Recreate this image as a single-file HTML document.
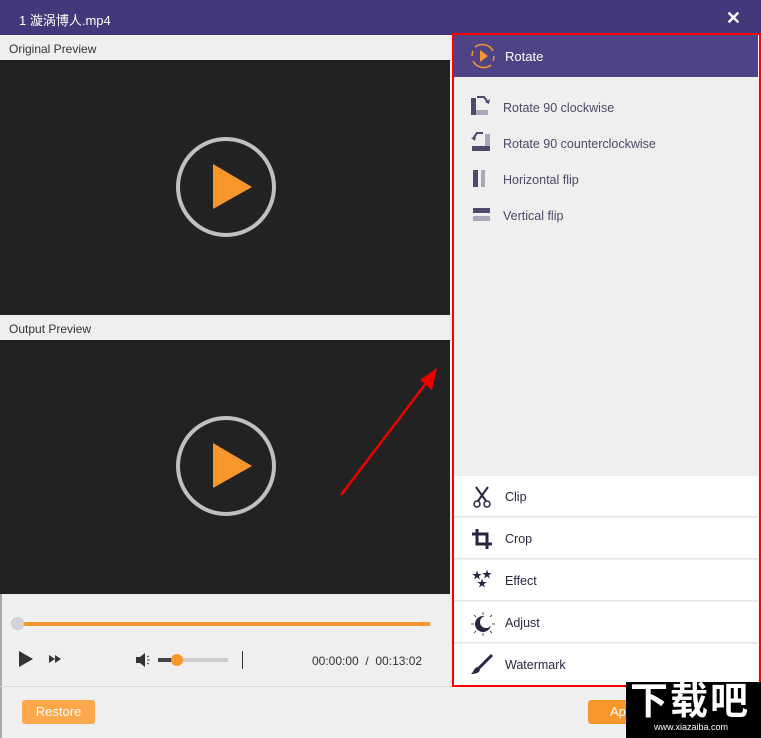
<!DOCTYPE html>
<html><head><meta charset="utf-8"><style>
*{margin:0;padding:0;box-sizing:border-box}
body{width:761px;height:738px;position:relative;overflow:hidden;background:#efefef;font-family:"Liberation Sans","Noto Sans CJK SC",sans-serif;font-size:12px;color:#333}
.abs{position:absolute}
.title{left:0;top:0;width:761px;height:35px;background:#45387a;color:#fff;font-size:13px;padding:10px 0 0 19px}
.lbl{left:0;width:450px;height:25px;background:#efefef;padding:7px 0 0 9px;color:#333}
.dark{left:0;width:450px;background:#222}
.item{left:471px;color:#4a4a6a;font-size:12.5px}
.bi{left:454px;width:304px;height:41px;background:#fff;border-bottom:1px solid #e6e6e6}
.bi span{position:absolute;left:51px;top:14px;color:#2a2440;font-size:12.5px}
.bi svg{position:absolute;left:16px;top:9px}
</style></head><body>
<div class="abs title">1 漩涡博人.mp4</div>
<div class="abs" style="right:20px;top:8px;color:#fff;font-size:18px;font-weight:bold">✕</div>
<div class="abs" style="left:0;top:35px;width:2px;height:703px;background:#aaa"></div>
<div class="abs lbl" style="top:35px">Original Preview</div>
<div class="abs dark" style="top:60px;height:255px"></div>
<div class="abs lbl" style="top:315px">Output Preview</div>
<div class="abs dark" style="top:340px;height:254px"></div>
<svg class="abs" style="left:0;top:0" width="450" height="600">
<circle cx="226" cy="187" r="48" fill="none" stroke="#c0c0c0" stroke-width="4"/>
<polygon points="213,164 252,187 213,209" fill="#f7962a"/>
<circle cx="226" cy="466" r="48" fill="none" stroke="#c0c0c0" stroke-width="4"/>
<polygon points="213,443 252,466 213,488" fill="#f7962a"/>
</svg>
<div class="abs" style="left:18px;top:622px;width:412px;height:4px;background:#f7962a"></div>
<div class="abs" style="left:11px;top:617px;width:13px;height:13px;border-radius:50%;background:#d4d4d4;border:1px solid #ccc"></div>
<svg class="abs" style="left:18px;top:650px" width="50" height="20"><polygon points="1,1 15,9 1,17" fill="#333"/><polygon points="31,5 37,9 31,13" fill="#333"/><polygon points="37,5 43,9 37,13" fill="#333"/></svg>
<svg class="abs" style="left:135px;top:652px" width="20" height="16"><rect x="1" y="5" width="4" height="6" fill="#333"/><polygon points="5,5 10,1 10,15 5,11" fill="#333"/><path d="M12 5l2-1M12 8h3M12 11l2 1" stroke="#555"/></svg>
<div class="abs" style="left:158px;top:658px;width:70px;height:4px;background:#ccc"></div>
<div class="abs" style="left:158px;top:658px;width:20px;height:4px;background:#444"></div>
<div class="abs" style="left:171px;top:654px;width:12px;height:12px;border-radius:50%;background:#f7962a"></div>
<div class="abs" style="left:242px;top:651px;width:1px;height:18px;background:#333"></div>
<div class="abs" style="left:312px;top:654px;color:#333;font-size:12px">00:00:00&nbsp; / &nbsp;00:13:02</div>
<div class="abs" style="left:0;top:686px;width:761px;height:1px;background:#d8d8d8"></div>
<div class="abs" style="left:22px;top:700px;width:73px;height:24px;background:#fda84a;border-radius:3px;color:#fff;font-size:13px;text-align:center;line-height:24px">Restore</div>
<div class="abs" style="left:588px;top:700px;width:80px;height:24px;background:#f7962a;border-radius:3px;color:#fff;font-size:13px;padding:4px 0 0 22px">Apply</div>
<div class="abs" style="left:452px;top:33px;width:309px;height:654px;border:2px solid #f00;background:#efefef"></div>
<div class="abs" style="left:454px;top:35px;width:304px;height:42px;background:#4f4287"></div>
<svg class="abs" style="left:469px;top:42px" width="28" height="28"><path d="M24 9A12 12 0 0 0 6 5M4 19A12 12 0 0 0 22 23" fill="none" stroke="#f7962a" stroke-width="1.5"/><path d="M3 14A11 11 0 0 1 4 9M25 14A11 11 0 0 1 24 19" fill="none" stroke="#f7962a" stroke-width="1.5"/><polygon points="11,8 19,14 11,20" fill="#f7962a"/></svg>
<div class="abs" style="left:505px;top:49px;color:#fff;font-size:13px">Rotate</div>
<svg class="abs" style="left:470px;top:96px" width="24" height="140">
<rect x="1" y="2" width="5" height="17" fill="#4f4a6a"/><rect x="6" y="14" width="12" height="5" fill="#aaa8b8"/><path d="M7 1h7l3 4" fill="none" stroke="#4f4a6a" stroke-width="2"/><polygon points="15,6 20,3 19,8" fill="#4f4a6a"/>
<rect x="15" y="38" width="5" height="17" fill="#aaa8b8"/><rect x="2" y="50" width="18" height="5" fill="#4f4a6a"/><path d="M13 37h-6l-3 4" fill="none" stroke="#4f4a6a" stroke-width="2"/><polygon points="1,42 6,40 5,45" fill="#4f4a6a"/>
<rect x="3" y="74" width="5" height="17" fill="#4f4a6a"/><rect x="11" y="74" width="4" height="17" fill="#aaa8b8"/>
<rect x="3" y="112" width="17" height="5" fill="#4f4a6a"/><rect x="3" y="120" width="17" height="5" fill="#aaa8b8"/>
</svg>
<div class="abs item" style="left:503px;top:101px">Rotate 90 clockwise</div>
<div class="abs item" style="left:503px;top:137px">Rotate 90 counterclockwise</div>
<div class="abs item" style="left:503px;top:173px">Horizontal flip</div>
<div class="abs item" style="left:503px;top:209px">Vertical flip</div>
<div class="abs bi" style="top:476px"><svg width="24" height="24"><path d="M6 2l10 14M18 2L8 16" stroke="#2a2440" stroke-width="2"/><circle cx="7" cy="19" r="3" fill="none" stroke="#2a2440" stroke-width="1.5"/><circle cx="17" cy="19" r="3" fill="none" stroke="#2a2440" stroke-width="1.5"/></svg><span>Clip</span></div>
<div class="abs bi" style="top:518px"><svg width="24" height="24"><path d="M7 2v15h15M2 7h15v15" fill="none" stroke="#2a2440" stroke-width="3"/></svg><span>Crop</span></div>
<div class="abs bi" style="top:560px"><svg width="24" height="24" font-size="10" fill="#2a2440"><text x="2" y="10">★</text><text x="12" y="9">★</text><text x="7" y="18">★</text></svg><span>Effect</span></div>
<div class="abs bi" style="top:602px"><svg width="26" height="26"><circle cx="13" cy="13" r="8" fill="#2a2440"/><circle cx="16" cy="11" r="6" fill="#fff"/><path d="M13 1v3M13 22v3M1 13h3M22 13h3M4 4l2 2M20 20l2 2M4 22l2-2M20 6l2-2" stroke="#555"/></svg><span>Adjust</span></div>
<div class="abs bi" style="top:644px;border:none"><svg width="24" height="24"><path d="M22 2L9 15" stroke="#2a2440" stroke-width="3"/><path d="M8 14c-4 0-4 5-7 7 4 0 9-1 9-5z" fill="#2a2440"/></svg><span>Watermark</span></div>
<svg class="abs" style="left:0;top:0" width="761" height="738"><line x1="341" y1="495" x2="430" y2="378" stroke="#e00" stroke-width="2.5"/><polygon points="437,368 432,390 420,380" fill="#e00"/></svg>
<div class="abs" style="left:626px;top:682px;width:135px;height:56px;background:#000;color:#fff">
<div style="font-size:38px;font-weight:bold;line-height:40px;padding-left:4px;letter-spacing:2px">下载吧</div>
<div style="font-size:9px;padding-left:28px">www.xiazaiba.com</div></div>
</body></html>
